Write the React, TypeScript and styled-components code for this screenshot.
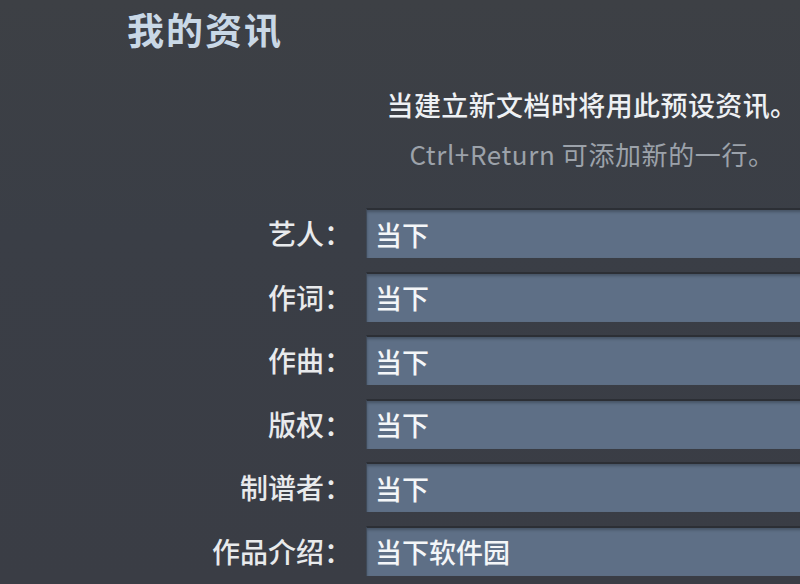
import React from 'react';
import styled, { createGlobalStyle } from 'styled-components';

const GlobalStyle = createGlobalStyle`
  html, body {
    margin: 0;
    padding: 0;
    background: #3b3e45;
    overflow: hidden;
  }
  body {
    font-family: 'Noto Sans CJK SC', 'Noto Sans', sans-serif;
  }
`;

interface Field {
  label: string;
  value: string;
}

const fields: Field[] = [
  { label: '艺人：', value: '当下' },
  { label: '作词：', value: '当下' },
  { label: '作曲：', value: '当下' },
  { label: '版权：', value: '当下' },
  { label: '制谱者：', value: '当下' },
  { label: '作品介绍：', value: '当下软件园' },
];

const App = () => {
  return (
    <Page>
      <GlobalStyle />
      <Title>我的资讯</Title>
      <Notes>
        <Note>当建立新文档时将用此预设资讯。</Note>
        <Hint>Ctrl+Return 可添加新的一行。</Hint>
      </Notes>
      <Form>
        {fields.map((field) => (
          <Row key={field.label}>
            <Label>{field.label}</Label>
            <Input defaultValue={field.value} />
          </Row>
        ))}
      </Form>
    </Page>
  );
};

const Page = styled.div`
  width: 800px;
  height: 584px;
  background: linear-gradient(180deg, #3d4045 0%, #3a3e46 40%, #3a3d45 100%);
  padding-top: 6px;
  box-sizing: border-box;
  overflow: hidden;
`;

const Title = styled.h1`
  margin: 0 0 0 127px;
  font-size: 37px;
  line-height: 46px;
  font-weight: bold;
  color: #c9d8e6;
  letter-spacing: 2px;
`;

const Notes = styled.div`
  margin: 30px 0 0 386px;
  width: 412px;
  text-align: center;
  white-space: nowrap;
`;

const Note = styled.div`
  font-size: 27px;
  line-height: 46px;
  font-weight: 500;
  color: #eef1f4;
  letter-spacing: 0.4px;
`;

const Hint = styled.div`
  font-size: 26px;
  line-height: 52px;
  color: #9ca2aa;
  letter-spacing: 0.6px;
`;

const Form = styled.div`
  display: flex;
  flex-direction: column;
  gap: 13.6px;
  margin-top: 28px;
`;

const Row = styled.div`
  display: grid;
  grid-template-columns: 352px 460px;
  column-gap: 14px;
  align-items: center;
`;

const Label = styled.label`
  text-align: right;
  font-size: 28px;
  font-weight: 500;
  color: #e8eaec;
  white-space: nowrap;
`;

const Input = styled.input`
  height: 50px;
  box-sizing: border-box;
  padding: 0 8px;
  border: none;
  border-top: 2px solid #2c2f35;
  border-left: 1px solid #3f4a58;
  background: #5e6f86;
  box-shadow: inset 0 2px 3px rgba(0, 0, 0, 0.25);
  color: #f4f6f8;
  font-family: 'Noto Sans CJK SC', 'Noto Sans', sans-serif;
  font-size: 27px;
  font-weight: 500;
  outline: none;
`;

export default App;
